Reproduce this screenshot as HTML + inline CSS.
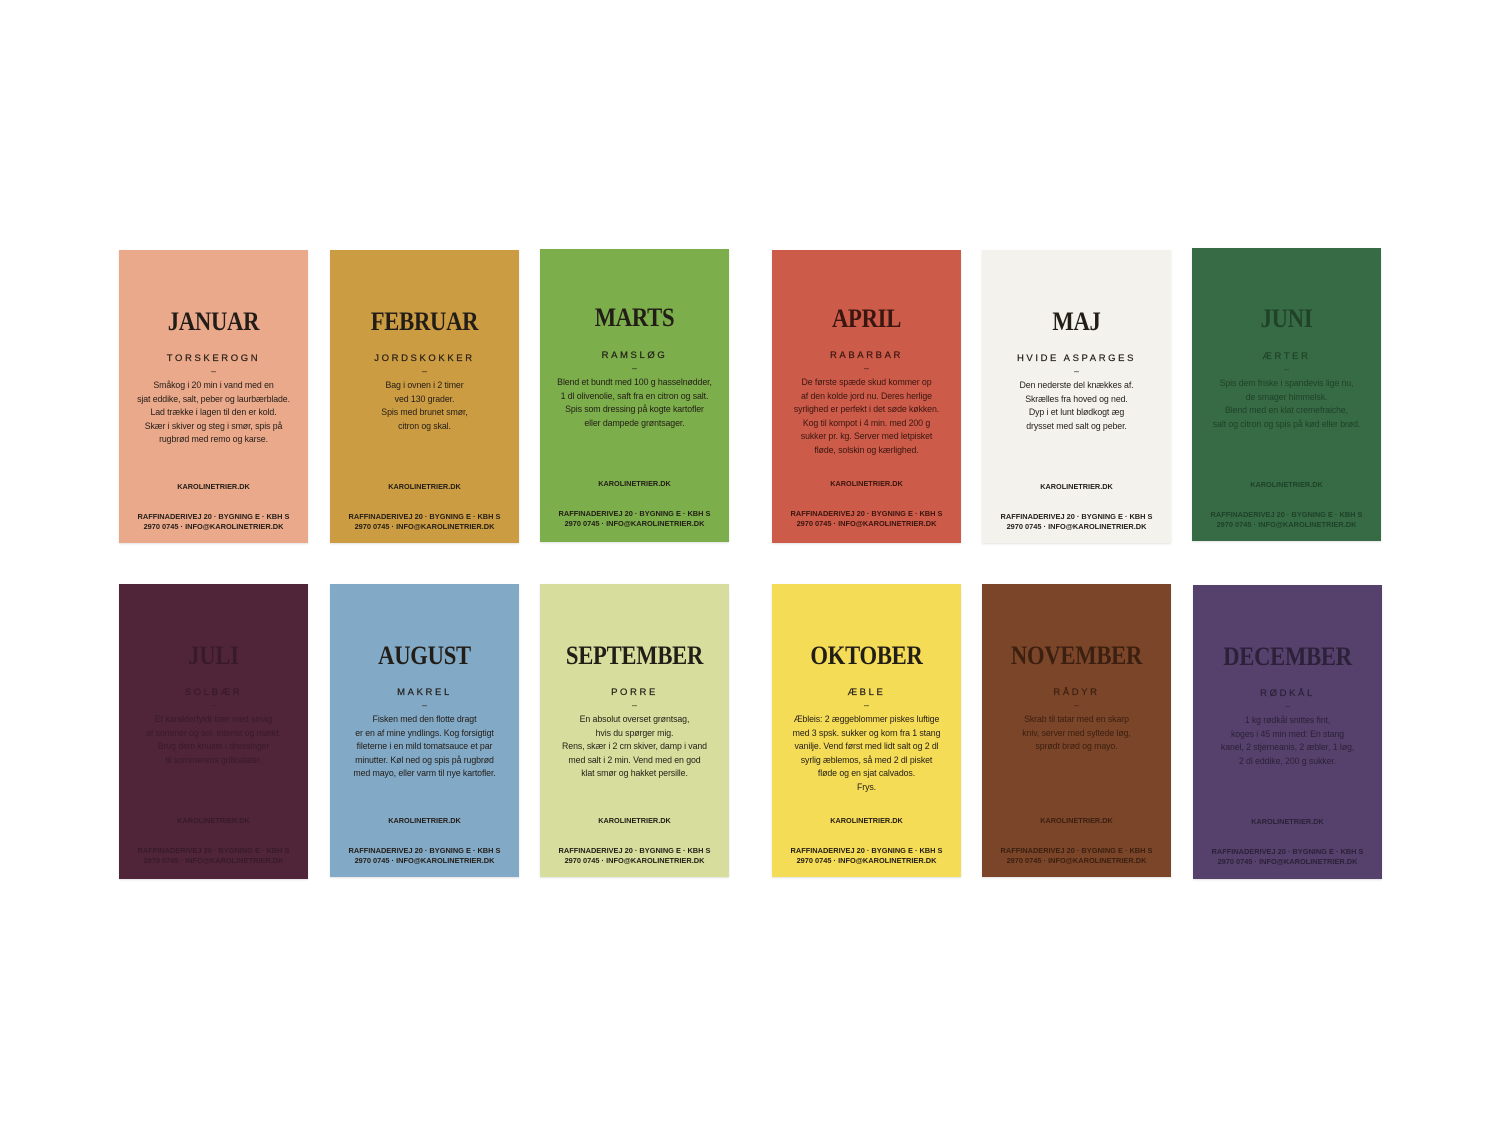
<!DOCTYPE html>
<html><head><meta charset="utf-8"><style>
body{margin:0;width:1500px;height:1127px;background:#fff;position:relative;overflow:hidden;font-family:"Liberation Sans",sans-serif}
.c{position:absolute;width:189px;height:293px;box-shadow:0 1px 2px rgba(0,0,0,.12);text-align:center;color:#231d18}
.t{position:absolute;left:-20px;right:-20px;top:57px;font-family:"Liberation Serif",serif;font-weight:bold;font-size:26px;line-height:30px;transform:scaleX(.87);letter-spacing:-.3px}
.s{position:absolute;left:0;right:0;top:103px;font-size:9.5px;letter-spacing:2.6px;line-height:12px;-webkit-text-stroke:.2px currentColor}
.d{position:absolute;left:0;right:0;top:115px;font-size:9px;line-height:12px}
.b{position:absolute;left:-10px;right:-10px;top:129px;font-size:8.8px;line-height:13.5px;letter-spacing:-.1px}
.w{position:absolute;left:0;right:0;top:232px;font-size:7.3px;font-weight:bold;line-height:10px}
.a{position:absolute;left:-10px;right:-10px;top:262px;font-size:7.4px;font-weight:bold;line-height:10px}
</style></head><body>

<div class="c" style="left:119px;top:250px;background:#eaa98b"><div class="t">JANUAR</div><div class="s">TORSKEROGN</div><div class="d">–</div><div class="b">Småkog i 20 min i vand med en<br>sjat eddike, salt, peber og laurbærblade.<br>Lad trække i lagen til den er kold.<br>Skær i skiver og steg i smør, spis på<br>rugbrød med remo og karse.</div><div class="w">KAROLINETRIER.DK</div><div class="a">RAFFINADERIVEJ 20 · BYGNING E · KBH S<br>2970 0745 · INFO@KAROLINETRIER.DK</div></div>

<div class="c" style="left:330px;top:250px;background:#cc9c42"><div class="t">FEBRUAR</div><div class="s">JORDSKOKKER</div><div class="d">–</div><div class="b">Bag i ovnen i 2 timer<br>ved 130 grader.<br>Spis med brunet smør,<br>citron og skal.</div><div class="w">KAROLINETRIER.DK</div><div class="a">RAFFINADERIVEJ 20 · BYGNING E · KBH S<br>2970 0745 · INFO@KAROLINETRIER.DK</div></div>

<div class="c" style="left:540px;top:249px;background:#7cae4b"><div class="t" style="top:54px">MARTS</div><div class="s" style="top:101px">RAMSLØG</div><div class="d" style="top:113px">–</div><div class="b" style="top:127px">Blend et bundt med 100 g hasselnødder,<br>1 dl olivenolie, saft fra en citron og salt.<br>Spis som dressing på kogte kartofler<br>eller dampede grøntsager.</div><div class="w" style="top:230px">KAROLINETRIER.DK</div><div class="a" style="top:260px">RAFFINADERIVEJ 20 · BYGNING E · KBH S<br>2970 0745 · INFO@KAROLINETRIER.DK</div></div>

<div class="c" style="left:772px;top:250px;background:#cc5b49;color:#3a1610"><div class="t" style="top:54px">APRIL</div><div class="s" style="top:100px">RABARBAR</div><div class="d" style="top:112px">–</div><div class="b" style="top:126px">De første spæde skud kommer op<br>af den kolde jord nu. Deres herlige<br>syrlighed er perfekt i det søde køkken.<br>Kog til kompot i 4 min. med 200 g<br>sukker pr. kg. Server med letpisket<br>fløde, solskin og kærlighed.</div><div class="w" style="top:229px">KAROLINETRIER.DK</div><div class="a" style="top:259px">RAFFINADERIVEJ 20 · BYGNING E · KBH S<br>2970 0745 · INFO@KAROLINETRIER.DK</div></div>

<div class="c" style="left:982px;top:250px;background:#f3f2ec"><div class="t">MAJ</div><div class="s">HVIDE ASPARGES</div><div class="d">–</div><div class="b">Den nederste del knækkes af.<br>Skrælles fra hoved og ned.<br>Dyp i et lunt blødkogt æg<br>drysset med salt og peber.</div><div class="w">KAROLINETRIER.DK</div><div class="a">RAFFINADERIVEJ 20 · BYGNING E · KBH S<br>2970 0745 · INFO@KAROLINETRIER.DK</div></div>

<div class="c" style="left:1192px;top:248px;background:#376b45;color:#1f4229"><div class="t" style="top:56px">JUNI</div><div class="s">ÆRTER</div><div class="d">–</div><div class="b">Spis dem friske i spandevis lige nu,<br>de smager himmelsk.<br>Blend med en klat cremefraiche,<br>salt og citron og spis på kød eller brød.</div><div class="w">KAROLINETRIER.DK</div><div class="a">RAFFINADERIVEJ 20 · BYGNING E · KBH S<br>2970 0745 · INFO@KAROLINETRIER.DK</div></div>

<div class="c" style="left:119px;top:584px;height:295px;background:#512539;color:#381a2c"><div class="t">JULI</div><div class="s">SOLBÆR</div><div class="d">–</div><div class="b">Et karakterfyldt bær med smag<br>af sommer og sol. Intenst og mørkt.<br>Brug dem knuste i dressinger<br>til sommerens grillcalater.</div><div class="w">KAROLINETRIER.DK</div><div class="a">RAFFINADERIVEJ 20 · BYGNING E · KBH S<br>2970 0745 · INFO@KAROLINETRIER.DK</div></div>

<div class="c" style="left:330px;top:584px;background:#82a9c5"><div class="t">AUGUST</div><div class="s">MAKREL</div><div class="d">–</div><div class="b">Fisken med den flotte dragt<br>er en af mine yndlings. Kog forsigtigt<br>fileterne i en mild tomatsauce et par<br>minutter. Køl ned og spis på rugbrød<br>med mayo, eller varm til nye kartofler.</div><div class="w">KAROLINETRIER.DK</div><div class="a">RAFFINADERIVEJ 20 · BYGNING E · KBH S<br>2970 0745 · INFO@KAROLINETRIER.DK</div></div>

<div class="c" style="left:540px;top:584px;background:#d7de9d"><div class="t">SEPTEMBER</div><div class="s">PORRE</div><div class="d">–</div><div class="b">En absolut overset grøntsag,<br>hvis du spørger mig.<br>Rens, skær i 2 cm skiver, damp i vand<br>med salt i 2 min. Vend med en god<br>klat smør og hakket persille.</div><div class="w">KAROLINETRIER.DK</div><div class="a">RAFFINADERIVEJ 20 · BYGNING E · KBH S<br>2970 0745 · INFO@KAROLINETRIER.DK</div></div>

<div class="c" style="left:772px;top:584px;background:#f5dc57"><div class="t">OKTOBER</div><div class="s">ÆBLE</div><div class="d">–</div><div class="b">Æbleis: 2 æggeblommer piskes luftige<br>med 3 spsk. sukker og korn fra 1 stang<br>vanilje. Vend først med lidt salt og 2 dl<br>syrlig æblemos, så med 2 dl pisket<br>fløde og en sjat calvados.<br>Frys.</div><div class="w">KAROLINETRIER.DK</div><div class="a">RAFFINADERIVEJ 20 · BYGNING E · KBH S<br>2970 0745 · INFO@KAROLINETRIER.DK</div></div>

<div class="c" style="left:982px;top:584px;background:#7b4529;color:#3b1f10"><div class="t">NOVEMBER</div><div class="s">RÅDYR</div><div class="d">–</div><div class="b">Skrab til tatar med en skarp<br>kniv, server med syltede løg,<br>sprødt brød og mayo.</div><div class="w">KAROLINETRIER.DK</div><div class="a">RAFFINADERIVEJ 20 · BYGNING E · KBH S<br>2970 0745 · INFO@KAROLINETRIER.DK</div></div>

<div class="c" style="left:1193px;top:585px;height:294px;background:#56416c;color:#2c2138"><div class="t">DECEMBER</div><div class="s">RØDKÅL</div><div class="d">–</div><div class="b">1 kg rødkål snittes fint,<br>koges i 45 min med: En stang<br>kanel, 2 stjerneanis, 2 æbler, 1 løg,<br>2 dl eddike, 200 g sukker.</div><div class="w">KAROLINETRIER.DK</div><div class="a">RAFFINADERIVEJ 20 · BYGNING E · KBH S<br>2970 0745 · INFO@KAROLINETRIER.DK</div></div>

</body></html>
